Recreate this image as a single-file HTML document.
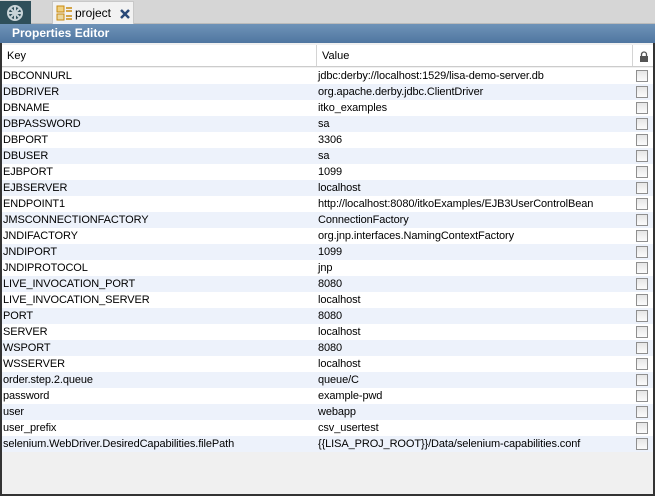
<!DOCTYPE html><html><head><style>
*{margin:0;padding:0;box-sizing:border-box}
body{width:655px;height:496px;overflow:hidden;background:#f0f0f0;font-family:"Liberation Sans",sans-serif;font-size:11px;position:relative}
#tabs{position:absolute;left:0;top:0;width:655px;height:24px;background:#d6d6d6;border-bottom:1px solid #bbb}
#t1{position:absolute;left:0;top:1px;width:31px;height:23px;background:#2f4f5a}
#t2{position:absolute;left:52px;top:1px;width:82px;height:23px;background:#f2f2f2;border:1px solid #c8c8c8;border-bottom:none}
#title{position:absolute;left:0;top:24px;width:655px;height:19px;background:linear-gradient(#6f93b8,#4f76a0);color:#fff;font-weight:bold;font-size:12px;padding:2px 0 0 12px}
#frame{position:absolute;left:0;top:43px;width:655px;height:453px;border:2px solid #333;border-top:none}
#hdr{position:absolute;left:2px;top:45px;width:651px;height:22px;background:#fff;border-bottom:1px solid #ccc}
.h{position:absolute;top:0;height:21px;line-height:22px;padding-left:5px;border-right:1px solid #d4d4d4;color:#000}
#rows{position:absolute;left:2px;top:68px;width:651px}
.r{height:16px;line-height:17px;position:relative;background:#fff;white-space:nowrap;letter-spacing:-0.1px}
.r:nth-child(even){background:#edf2fb}
.k{position:absolute;left:1px}.v{position:absolute;left:316px}
.c{position:absolute;left:634px;top:2px;width:12px;height:12px;border:1px solid #8f8f8f;background:linear-gradient(#e6e6e6,#fbfbfb)}
</style></head><body>
<div id="tabs">
<div id="t1"><svg width="31" height="23"><g stroke="#c9d4d8" stroke-width="2" fill="none"><circle cx="15" cy="12" r="7"/><path d="M15 5v14M8 12h14M10 7l10 10M20 7L10 17"/></g></svg></div>
<div id="t2"><svg width="20" height="20" style="position:absolute;left:2px;top:1px"><rect x="2" y="3" width="7" height="6" fill="#f0d080" stroke="#c88a10"/><rect x="2" y="11" width="7" height="6" fill="#ead7a0" stroke="#c88a10"/><path d="M11 5h6M11 8h6M11 13h6M11 16h6" stroke="#c88a10" stroke-width="1.5"/></svg><span style="position:absolute;left:22px;top:4px;font-size:12px">project</span><svg width="12" height="12" style="position:absolute;left:66px;top:6px"><path d="M2 2L10 10M10 2L2 10" stroke="#2a4a78" stroke-width="2.5"/></svg></div>
</div>
<div id="title">Properties Editor</div>
<div id="frame"></div>
<div id="hdr"><div class="h" style="left:0;width:315px">Key</div><div class="h" style="left:315px;width:316px">Value</div>
<svg width="10" height="12" style="position:absolute;left:637px;top:6px"><path d="M2.5 5V3.5a2.5 2.5 0 0 1 5 0V5" stroke="#555" fill="none" stroke-width="1.3"/><rect x="1" y="5" width="8" height="6" fill="#555"/></svg></div>
<div id="rows">
<div class="r"><span class="k">DBCONNURL</span><span class="v">jdbc:derby://localhost:1529/lisa-demo-server.db</span><i class="c"></i></div>
<div class="r"><span class="k">DBDRIVER</span><span class="v">org.apache.derby.jdbc.ClientDriver</span><i class="c"></i></div>
<div class="r"><span class="k">DBNAME</span><span class="v">itko_examples</span><i class="c"></i></div>
<div class="r"><span class="k">DBPASSWORD</span><span class="v">sa</span><i class="c"></i></div>
<div class="r"><span class="k">DBPORT</span><span class="v">3306</span><i class="c"></i></div>
<div class="r"><span class="k">DBUSER</span><span class="v">sa</span><i class="c"></i></div>
<div class="r"><span class="k">EJBPORT</span><span class="v">1099</span><i class="c"></i></div>
<div class="r"><span class="k">EJBSERVER</span><span class="v">localhost</span><i class="c"></i></div>
<div class="r"><span class="k">ENDPOINT1</span><span class="v">http://localhost:8080/itkoExamples/EJB3UserControlBean</span><i class="c"></i></div>
<div class="r"><span class="k">JMSCONNECTIONFACTORY</span><span class="v">ConnectionFactory</span><i class="c"></i></div>
<div class="r"><span class="k">JNDIFACTORY</span><span class="v">org.jnp.interfaces.NamingContextFactory</span><i class="c"></i></div>
<div class="r"><span class="k">JNDIPORT</span><span class="v">1099</span><i class="c"></i></div>
<div class="r"><span class="k">JNDIPROTOCOL</span><span class="v">jnp</span><i class="c"></i></div>
<div class="r"><span class="k">LIVE_INVOCATION_PORT</span><span class="v">8080</span><i class="c"></i></div>
<div class="r"><span class="k">LIVE_INVOCATION_SERVER</span><span class="v">localhost</span><i class="c"></i></div>
<div class="r"><span class="k">PORT</span><span class="v">8080</span><i class="c"></i></div>
<div class="r"><span class="k">SERVER</span><span class="v">localhost</span><i class="c"></i></div>
<div class="r"><span class="k">WSPORT</span><span class="v">8080</span><i class="c"></i></div>
<div class="r"><span class="k">WSSERVER</span><span class="v">localhost</span><i class="c"></i></div>
<div class="r"><span class="k">order.step.2.queue</span><span class="v">queue/C</span><i class="c"></i></div>
<div class="r"><span class="k">password</span><span class="v">example-pwd</span><i class="c"></i></div>
<div class="r"><span class="k">user</span><span class="v">webapp</span><i class="c"></i></div>
<div class="r"><span class="k">user_prefix</span><span class="v">csv_usertest</span><i class="c"></i></div>
<div class="r"><span class="k">selenium.WebDriver.DesiredCapabilities.filePath</span><span class="v">{{LISA_PROJ_ROOT}}/Data/selenium-capabilities.conf</span><i class="c"></i></div>
</div>
</body></html>
